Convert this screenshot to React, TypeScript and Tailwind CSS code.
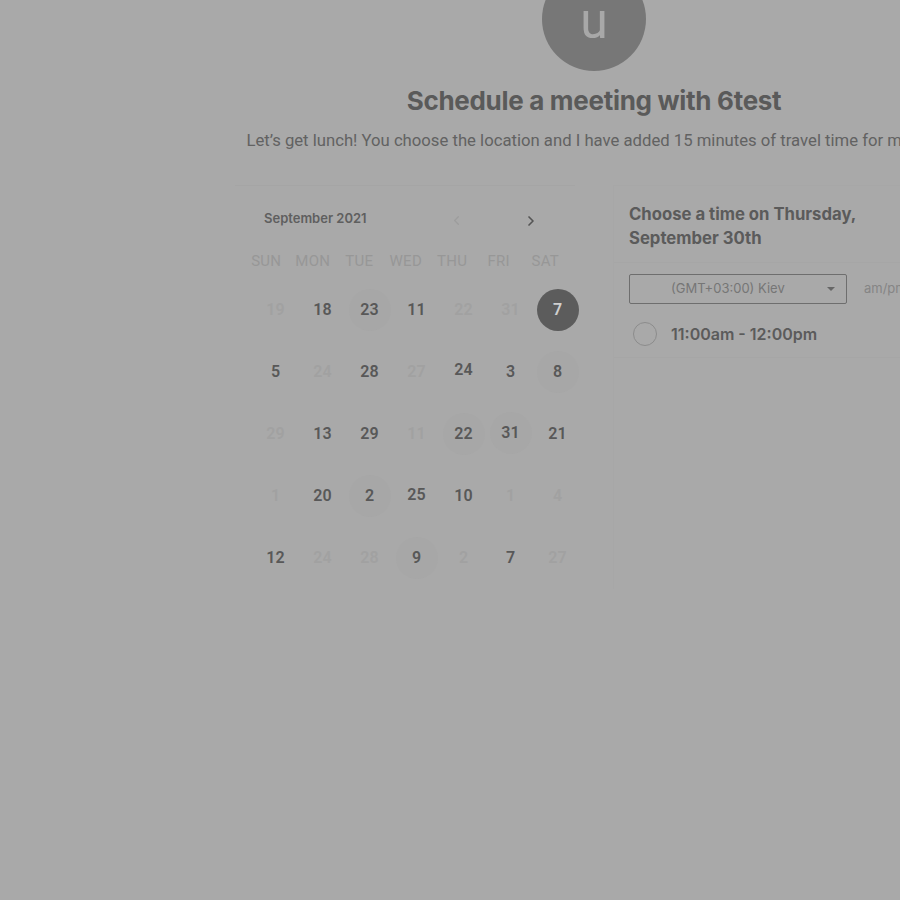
import { ChevronLeft, ChevronRight } from "lucide-react";

type Day = { n: number; faint?: boolean; ring?: boolean; selected?: boolean; dy?: number };

const WEEKDAYS = ["SUN", "MON", "TUE", "WED", "THU", "FRI", "SAT"];

const WEEKS: Day[][] = [
	[{ n: 19, faint: true }, { n: 18 }, { n: 23, ring: true }, { n: 11 }, { n: 22, faint: true }, { n: 31, faint: true }, { n: 7, selected: true }],
	[{ n: 5 }, { n: 24, faint: true }, { n: 28 }, { n: 27, faint: true }, { n: 24, dy: -2 }, { n: 3 }, { n: 8, ring: true }],
	[{ n: 29, faint: true }, { n: 13 }, { n: 29 }, { n: 11, faint: true }, { n: 22, ring: true }, { n: 31, ring: true, dy: -1 }, { n: 21 }],
	[{ n: 1, faint: true }, { n: 20 }, { n: 2, ring: true }, { n: 25, dy: -1 }, { n: 10 }, { n: 1, faint: true }, { n: 4, faint: true }],
	[{ n: 12 }, { n: 24, faint: true }, { n: 28, faint: true }, { n: 9, ring: true }, { n: 2, faint: true }, { n: 7 }, { n: 27, faint: true }],
];

function DayCell({ day }: { day: Day }) {
	const base = "flex h-[42px] w-[42px] items-center justify-center rounded-full text-[16px] font-semibold";
	if (day.selected) {
		return <span className={`${base} bg-[#5c5c5c] text-[#cfcfcf]`}>{day.n}</span>;
	}
	return (
		<span
			className={`${base} ${day.faint ? "text-[#a1a1a1] font-normal" : "text-[#585858]"} ${day.ring ? "bg-[#a7a7a7]" : ""} ${day.dy === -2 ? "-translate-y-[2px]" : day.dy === -1 ? "-translate-y-[1px]" : ""}`}
		>
			{day.n}
		</span>
	);
}

function Calendar() {
	return (
		<div className="w-[340px] border-t border-[#a5a5a5]">
			<div className="flex h-[65px] items-center pl-[29px]">
				<span className="w-[180px] font-['Inter',sans-serif] text-[13px] font-semibold text-[#5f5f5f]">September 2021</span>
				<ChevronLeft className="ml-[5px] mt-[4px] h-[15px] w-[15px] text-[#9d9d9d]" strokeWidth={2} />
				<ChevronRight className="ml-[59px] mt-[4px] h-[16px] w-[16px] text-[#555]" strokeWidth={2.5} />
			</div>
			<div className="grid grid-cols-[repeat(7,46.5px)] pl-[8px]">
				{WEEKDAYS.map((d) => (
					<span key={d} className="text-center text-[15px] leading-[20px] tracking-[0.3px] text-[#979797]">
						{d}
					</span>
				))}
			</div>
			<div className="mt-[8px] grid grid-cols-[repeat(7,47px)] auto-rows-[62px] pl-[17px]">
				{WEEKS.flat().map((day, i) => (
					<div key={i} className="flex items-center justify-center">
						<DayCell day={day} />
					</div>
				))}
			</div>
		</div>
	);
}

function TimePanel() {
	return (
		<div className="w-[340px] border-l border-t border-[#a7a7a7] pt-[16px]">
			<div className="border-b border-[#a6a6a6] pb-[12px] pl-[15px]">
				<h2 className="text-[16.7px] font-bold leading-[24px] text-[#5b5b5b]">
					Choose a time on Thursday,
					<br />
					September 30th
				</h2>
			</div>
			<div className="border-b border-[#a6a6a6] pb-[11px] pl-[15px]">
				<div className="mt-[11px] flex items-center">
					<div className="flex h-[30px] w-[218px] items-center justify-between rounded-[2px] border border-[#6e6e6e] pl-[41px] pr-[11px]">
						<span className="text-[13px] text-[#767676]">(GMT+03:00) Kiev</span>
						<span className="h-0 w-0 border-l-[4px] border-r-[4px] border-t-[4px] border-l-transparent border-r-transparent border-t-[#666]" />
					</div>
					<span className="ml-[17px] whitespace-nowrap text-[13px] text-[#858585]">am/pm</span>
				</div>
				<div className="mt-[18px] flex items-center pl-[4px]">
					<span className="h-[24px] w-[24px] rounded-full border border-[#8c8c8c]" />
					<span className="ml-[14px] text-[16px] font-semibold text-[#5b5b5b]">11:00am - 12:00pm</span>
				</div>
			</div>
		</div>
	);
}

export default function App() {
	return (
		<div className="h-[900px] w-[900px] overflow-hidden bg-[#a9a9a9] font-['Roboto',sans-serif]">
			<div className="flex w-[1188px] flex-col items-center">
				<div className="-mt-[33px] flex h-[104px] w-[104px] items-end justify-center rounded-full bg-[#777777] pb-[26px]">
					<span className="text-[50px] leading-[48px] text-[#a8a8a8]">u</span>
				</div>
				<h1 className="mt-[13px] font-['Inter',sans-serif] text-[26px] font-bold leading-[34px] tracking-[-0.3px] text-[#5a5a5a]">
					Schedule a meeting with 6test
				</h1>
				<p className="mt-[12px] whitespace-nowrap text-[16.7px] leading-[22px] text-[#626262]">
					Let’s get lunch! You choose the location and I have added 15 minutes of travel time for myself.
				</p>
				<div className="mt-[33px] flex gap-[38px] font-['Inter',sans-serif]">
					<div className="font-['Roboto',sans-serif]">
						<Calendar />
					</div>
					<TimePanel />
				</div>
			</div>
		</div>
	);
}
